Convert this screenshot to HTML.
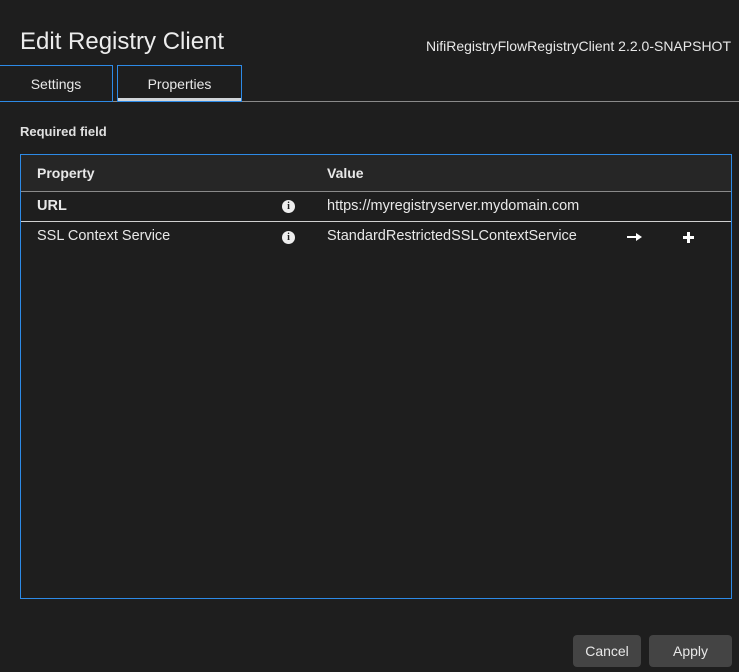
<!DOCTYPE html>
<html><head><style>
body{margin:0;width:739px;height:672px;background:#1e1e1e;font-family:"Liberation Sans",sans-serif;color:#e8e8e8;position:relative;overflow:hidden}
.a{position:absolute}
</style></head><body>
<div class="a" style="left:20px;top:28px;font-size:24px;color:#ececec">Edit Registry Client</div>
<div class="a" style="right:8px;top:38px;font-size:14px;color:#e8e8e8">NifiRegistryFlowRegistryClient 2.2.0-SNAPSHOT</div>
<div class="a" style="left:0;top:101px;width:739px;height:1px;background:#8a8a8a"></div>
<div class="a" style="left:0;top:65px;width:112px;height:35px;border:1px solid #2d8ae6;border-left:none;background:#1e1e1e;font-size:14px;text-align:center;line-height:36px">Settings</div>
<div class="a" style="left:117px;top:65px;width:123px;height:35px;border:1px solid #2d8ae6;background:#1e1e1e;font-size:14px;text-align:center;line-height:36px;box-shadow:inset 0 -3px 0 #d0d4d8">Properties</div>
<div class="a" style="left:20px;top:124px;font-size:13px;font-weight:bold;color:#e0e0e0">Required field</div>
<div class="a" style="left:20px;top:154px;width:710px;height:443px;border:1px solid #2d8ae6;background:#1e1e1e">
 <div class="a" style="left:0;top:0;width:710px;height:36px;background:#262626;border-bottom:1px solid #8a8a8a;font-size:14px;font-weight:bold">
  <span class="a" style="left:16px;top:10px">Property</span><span class="a" style="left:306px;top:10px">Value</span></div>
 <div class="a" style="left:0;top:37px;width:710px;height:29px;border-bottom:1px solid #d0d0d0;font-size:14.5px">
  <span class="a" style="left:16px;top:6px;font-weight:bold">URL</span>
  <span class="a" style="left:261px;top:8px;width:13px;height:13px;border-radius:50%;background:#eee;color:#1e1e1e;font-size:10px;font-weight:bold;text-align:center;line-height:13px;font-family:'Liberation Serif',serif">i</span>
  <span class="a" style="left:306px;top:6px">https://myregistryserver.mydomain.com</span></div>
 <div class="a" style="left:0;top:67px;width:710px;height:30px;font-size:14.5px">
  <span class="a" style="left:16px;top:6px">SSL Context Service</span>
  <span class="a" style="left:261px;top:9px;width:13px;height:13px;border-radius:50%;background:#eee;color:#1e1e1e;font-size:10px;font-weight:bold;text-align:center;line-height:13px;font-family:'Liberation Serif',serif">i</span>
  <span class="a" style="left:306px;top:6px">StandardRestrictedSSLContextService</span>
  <span class="a" style="left:606px;top:14px;width:12px;height:2px;background:#fff"></span>
  <span class="a" style="left:615px;top:11px;width:0;height:0;border-left:6px solid #fff;border-top:4px solid transparent;border-bottom:4px solid transparent"></span>
  <span class="a" style="left:662px;top:14px;width:11px;height:3px;background:#fff"></span>
  <span class="a" style="left:666px;top:10px;width:3px;height:11px;background:#fff"></span></div>
</div>
<div class="a" style="left:573px;top:635px;width:68px;height:32px;background:#444;border-radius:4px;font-size:14px;text-align:center;line-height:32px">Cancel</div>
<div class="a" style="left:649px;top:635px;width:83px;height:32px;background:#444;border-radius:4px;font-size:14px;text-align:center;line-height:32px">Apply</div>
</body></html>
